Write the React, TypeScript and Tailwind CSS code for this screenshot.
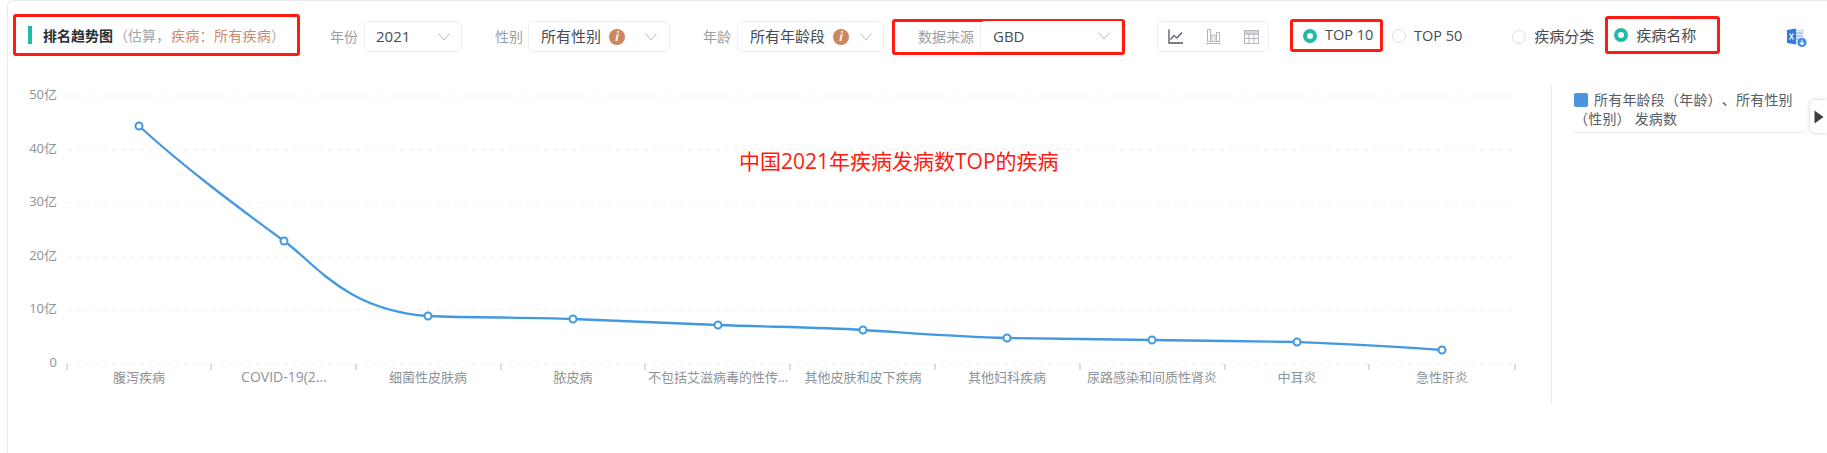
import React from 'react';

const font = { fontFamily: '"Open Sans", "Noto Sans CJK SC", sans-serif' };

const gridLines = [96, 149.5, 203, 257, 310, 364];
const yLabels = ['50亿', '40亿', '30亿', '20亿', '10亿', '0'];
const ticks = [67, 211, 356, 501, 645, 790, 935, 1080, 1225, 1369, 1515];
const points = [
  [139, 126], [284, 241], [428, 316], [573, 319], [718, 325],
  [863, 330], [1007, 338], [1152, 340], [1297, 342], [1442, 350],
];
const xLabels = [
  '腹泻疾病', 'COVID-19(2...', '细菌性皮肤病', '脓皮病', '不包括艾滋病毒的性传...',
  '其他皮肤和皮下疾病', '其他妇科疾病', '尿路感染和间质性肾炎', '中耳炎', '急性肝炎',
];

const linePath =
  'M139,126 C185,168 235,205 284,241 C315,263 345,310 428,316 C476,318 525,317 573,319 ' +
  'C621,321 670,323 718,325 C767,327 815,327 863,330 C911,333 959,337 1007,338 ' +
  'C1055,339 1104,339 1152,340 C1200,341 1249,341 1297,342 C1345,344 1394,346 1442,350';

const Chevron = () => (
  <svg width="12" height="8" viewBox="0 0 12 8" fill="none" stroke="#b9bec3" strokeWidth="1">
    <path d="M0.5 0.5 L6 7 L11.5 0.5" />
  </svg>
);

const InfoDot = () => (
  <span className="w-[16px] h-[16px] rounded-full bg-[#cd8660] text-white flex items-center justify-center text-[12px] font-bold italic leading-none">
    i
  </span>
);

const Select: React.FC<{ text: string; className: string; info?: boolean }> = ({ text, className, info }) => (
  <div className={`flex items-center h-[31px] border border-[#eeeff1] rounded-[5px] bg-white ${className}`}>
    <span className="text-[15px] text-[#444b52] whitespace-nowrap">{text}</span>
    {info && (
      <span className="ml-[8px]">
        <InfoDot />
      </span>
    )}
    <span className="ml-auto flex">
      <Chevron />
    </span>
  </div>
);

const Label: React.FC<{ text: string; className: string }> = ({ text, className }) => (
  <span className={`text-[14px] text-[#9a9fa5] whitespace-nowrap leading-[31px] ${className}`}>{text}</span>
);

const Radio: React.FC<{ text: string; on?: boolean; className?: string; textClass?: string }> = ({ text, on, className, textClass }) => (
  <div className={`flex items-center gap-[8px] ${className ?? ''}`}>
    <span className={`w-[14px] h-[14px] rounded-full bg-white ${on ? 'border-[4px] border-[#1fbba6]' : 'border border-[#dcdfe2]'}`} />
    <span className={`${textClass ?? 'text-[15px]'} text-[#444b52] whitespace-nowrap leading-none`}>{text}</span>
  </div>
);

export default function App() {
  return (
    <div className="relative w-[1827px] h-[453px] bg-white pl-[7px] overflow-hidden [text-spacing-trim:space-all]" style={font}>
      <div className="h-full border-l border-t border-[#e9eaec] rounded-tl-[6px]">
        {/* 筛选栏 */}
        <div className="flex items-start h-[84px]">
          <div className="flex items-center ml-[5px] mt-[13px] w-[287px] h-[42px] border-[3px] border-[#ff1a12] rounded-[3px] pl-[12px]">
            <span className="w-[4px] h-[18px] bg-[#1fbba6]" />
            <span className="ml-[11px] text-[14px] font-bold text-[#2b3036] whitespace-nowrap">排名趋势图</span>
            <span className="ml-[1px] text-[14px] text-[#a3a7ab] whitespace-nowrap">（估算，</span>
            <span className="ml-[1px] text-[14px] tracking-[0.3px] text-[#cd8c6c] whitespace-nowrap">疾病：所有疾病</span>
            <span className="text-[14px] text-[#a3a7ab] whitespace-nowrap">）</span>
          </div>

          <Label text="年份" className="ml-[30px] mt-[20px]" />
          <div className="ml-[6px] mt-[20px]">
            <Select text="2021" className="w-[98px] pl-[11px] pr-[11px]" />
          </div>

          <Label text="性别" className="ml-[33px] mt-[20px]" />
          <div className="ml-[5px] mt-[20px]">
            <Select text="所有性别" info className="w-[142px] pl-[12px] pr-[12px]" />
          </div>

          <Label text="年龄" className="ml-[33px] mt-[20px]" />
          <div className="ml-[6px] mt-[20px]">
            <Select text="所有年龄段" info className="w-[147px] pl-[12px] pr-[11px]" />
          </div>

          <div className="flex ml-[8px] mt-[18px] w-[233px] h-[36px] border-[3px] border-[#ff1a12] rounded-[3px] pl-[23px]">
            <Label text="数据来源" className="mt-[-1px]" />
            <div className="ml-[6px] mt-[-1px] flex-1">
              <Select text="GBD" className="border-t-0 pl-[12px] pr-[11px] rounded-r-none" />
            </div>
          </div>

          <div className="flex items-center ml-[32px] mt-[20px] w-[112px] h-[31px] border border-[#eeeff1] rounded-[5px] pl-[10px] gap-[23px]">
            <svg width="15" height="15" viewBox="0 0 15 15" fill="none">
              <path d="M1 0.5 V14 H15" stroke="#4a5560" strokeWidth="1.3" />
              <path d="M2.5 10.5 L6 6.5 L9 9 L14 3.5" stroke="#4a5560" strokeWidth="1.2" />
            </svg>
            <svg width="15" height="15" viewBox="0 0 15 15" fill="none" stroke="#b4b8bc" strokeWidth="1">
              <rect x="1.5" y="0.5" width="3" height="12" />
              <rect x="6" y="6" width="3" height="6.5" />
              <rect x="10.5" y="3.5" width="3" height="9" />
              <path d="M0 14.5 H15" />
            </svg>
            <svg width="15" height="14" viewBox="0 0 15 14" fill="none" stroke="#b4b8bc" strokeWidth="1">
              <rect x="0.5" y="0.5" width="14" height="13" />
              <path d="M0.5 4 H14.5 M0.5 8.5 H14.5 M5 4 V13.5 M10 4 V13.5" />
              <rect x="0.5" y="0.5" width="14" height="3.5" fill="#d5d8da" />
            </svg>
          </div>

          <div className="flex items-center ml-[21px] mt-[18px] w-[93px] h-[33px] border-[3px] border-[#ff1a12] rounded-[3px] pl-[10px]">
            <Radio text="TOP 10" on textClass="text-[14.5px]" />
          </div>
          <Radio text="TOP 50" textClass="text-[14.5px]" className="ml-[9px] mt-[28px]" />
          <Radio text="疾病分类" className="ml-[50px] mt-[28px]" />
          <div className="flex items-center ml-[11px] mt-[15px] w-[115px] h-[38px] border-[3px] border-[#ff1a12] rounded-[3px] pl-[6px] self-start shrink-0">
            <Radio text="疾病名称" on />
          </div>

          <svg className="ml-[67px] mt-[27px] shrink-0" width="20" height="20" viewBox="0 0 20 20">
            <rect x="6" y="2" width="10" height="13" fill="#e3ebf8" stroke="#b9cdea" strokeWidth="0.8" />
            <path d="M9 5 H15 M9 8 H15 M9 11 H15" stroke="#7ea6dd" strokeWidth="1" />
            <path d="M0 2 L9 0.5 V16.5 L0 15 Z" fill="#2f7de1" />
            <path d="M2.6 5.5 L6.4 11.5 M6.4 5.5 L2.6 11.5" stroke="#fff" strokeWidth="1.2" />
            <circle cx="15" cy="14.5" r="4.6" fill="#3f8ae6" />
            <path d="M15 11.8 V16 M13 14.5 L15 16.6 L17 14.5" stroke="#fff" strokeWidth="1.1" fill="none" />
          </svg>
        </div>

        {/* 图表区 */}
        <div className="flex">
          <div className="relative w-[1543px] h-[320px] shrink-0">
            <svg width="1543" height="320" viewBox="8 85 1543 320">
              {gridLines.map((y) => (
                <line key={y} x1="67" x2="1515" y1={y} y2={y} stroke="#eef2f1" strokeWidth="1" strokeDasharray="5 4" />
              ))}
              {ticks.map((x) => (
                <line key={x} x1={x} x2={x} y1="364" y2="370" stroke="#b4b8bb" strokeWidth="1" />
              ))}
              {yLabels.map((t, i) => (
                <text key={t} x="57" y={gridLines[i] + 3} textAnchor="end" fontSize="13" fill="#8c9399">
                  {t}
                </text>
              ))}
              {xLabels.map((t, i) => (
                <text key={t} x={points[i][0]} y="382" textAnchor="middle" fontSize={i === 1 ? 14 : 13} fill="#8c9399">
                  {t}
                </text>
              ))}
              <path d={linePath} fill="none" stroke="#4299e1" strokeWidth="2.3" />
              {points.map(([x, y]) => (
                <circle key={x} cx={x} cy={y} r="3.5" fill="#fff" stroke="#4299e1" strokeWidth="2" />
              ))}
            </svg>
            <div className="absolute left-[731px] top-[66px] text-[21px] text-[#ff1a12] whitespace-nowrap leading-none">
              中国2021年疾病发病数TOP的疾病
            </div>
          </div>

          <div className="border-l border-[#e9eaec] h-[319px] pl-[22px] pt-[5px]">
            <div className="w-[231px] border-b border-[#e9eaec] pb-[4px] text-[14px] tracking-[0.2px] leading-[19px] text-[#555c63]">
              <span className="inline-block w-[14px] h-[14px] rounded-[2px] bg-[#4a95dc] mr-[6px] align-[-2px]" />
              所有年龄段（年龄）、所有性别（性别） 发病数
            </div>
          </div>
        </div>
      </div>

      {/* 展开按钮 */}
      <div className="absolute right-0 top-[100px] w-[17px] h-[33px] bg-white rounded-l-[5px] shadow-[0_0_4px_rgba(0,0,0,0.2)] flex items-center justify-end pr-[3px]">
        <svg width="10" height="14" viewBox="0 0 10 14">
          <path d="M0.5 0.5 L9.5 7 L0.5 13.5 Z" fill="#3a3f45" />
        </svg>
      </div>
    </div>
  );
}
